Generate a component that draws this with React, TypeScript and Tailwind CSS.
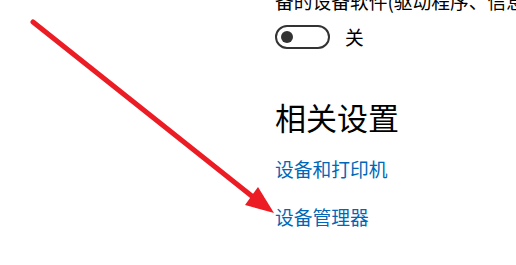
import React from "react";

const font = { fontFamily: '"Noto Sans CJK SC", "Noto Sans", sans-serif' };

const App: React.FC = () => {
  return (
    <div
      className="relative w-[516px] h-[265px] overflow-hidden bg-white text-black"
      style={font}
    >
      <div className="flex flex-col pl-[275px]">
        <div className="-mt-[13px] h-[28px] leading-[28px] text-[18.75px] whitespace-nowrap">
          备的设备软件(驱动程序、信息和图标)。
        </div>

        <div className="mt-[10px] flex h-[24px] items-center gap-[15px]">
          <div className="flex h-[24px] w-[55px] items-center rounded-full border-2 border-[#333] px-[4px]">
            <div className="h-[12px] w-[12px] rounded-full bg-[#333]" />
          </div>
          <span className="text-[18.75px] leading-[24px]">关</span>
        </div>

        <h2 className="mt-[48px] h-[40px] leading-[40px] text-[31px] font-normal">
          相关设置
        </h2>

        <a className="mt-[18px] h-[28px] leading-[28px] text-[18.75px] text-[#0067b8]">
          设备和打印机
        </a>

        <a className="mt-[20px] h-[28px] leading-[28px] text-[18.75px] text-[#0067b8]">
          设备管理器
        </a>
      </div>

      {/* red annotation arrow drawn over the screenshot */}
      <svg
        className="pointer-events-none absolute left-0 top-0"
        width="516"
        height="265"
        viewBox="0 0 516 265"
      >
        <line
          x1="33"
          y1="22"
          x2="253"
          y2="197"
          stroke="#ec1c24"
          strokeWidth="5"
          strokeLinecap="round"
        />
        <polygon points="258,187 245,205 274,213" fill="#ec1c24" />
      </svg>
    </div>
  );
};

export default App;
